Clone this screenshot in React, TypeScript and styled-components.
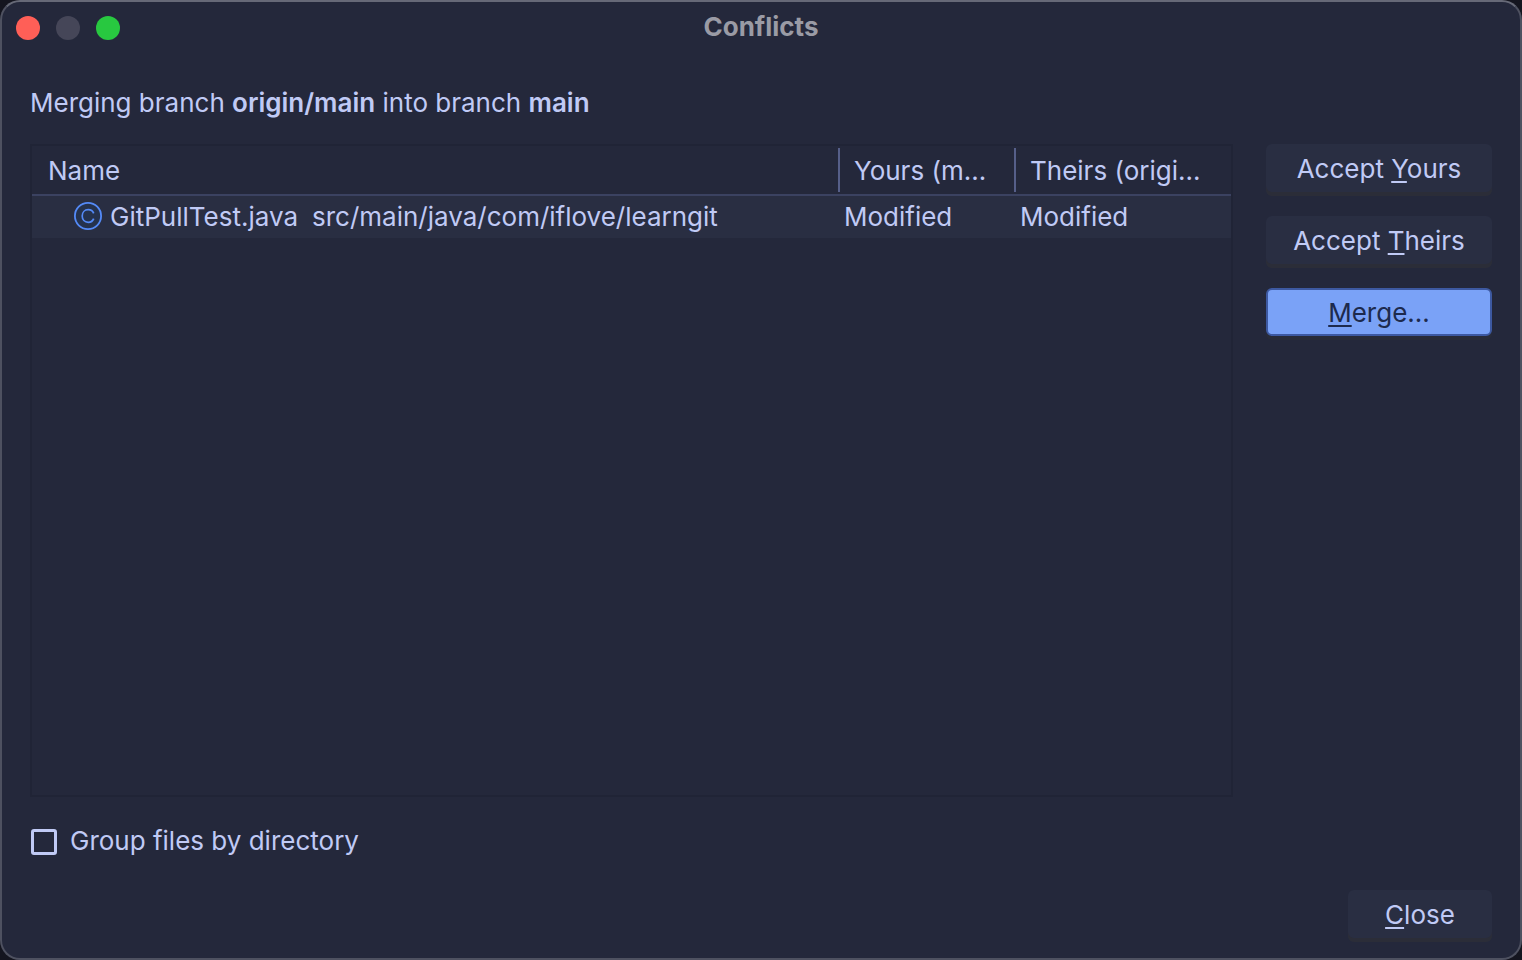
import React, { useState } from "react";
import styled, { createGlobalStyle } from "styled-components";

const colors = {
  window: "#24283b",
  text: "#c0caf5",
  panel: "#292e42",
  edge: "#202436",
  divider: "#3b4261",
  separator: "#565f89",
  accent: "#7aa2f7",
};

const GlobalStyle = createGlobalStyle`
  * { box-sizing: border-box; }
  body {
    margin: 0;
    background: #14151f;
    color: ${colors.text};
    font: 400 26px/32px Inter, sans-serif;
  }
`;

const Dialog = styled.main`
  display: flex;
  flex-direction: column;
  min-height: 100vh;
  background: ${colors.window};
  border: 2px solid #4e5160;
  border-top-color: #666977;
  border-radius: 20px;
`;

const TitleBar = styled.header`
  display: grid;
  grid-template-columns: 1fr auto 1fr;
  align-items: center;
  height: 52px;
  padding: 0 14px;
`;

const WindowControls = styled.div`
  display: flex;
  gap: 16px;
`;

const WindowControl = styled.button<{ $color: string }>`
  width: 24px;
  height: 24px;
  padding: 0;
  border: 0;
  border-radius: 50%;
  background: ${({ $color }) => $color};
`;

const Title = styled.h1`
  margin: 0;
  padding-bottom: 2px;
  color: #9a9ba5;
  font-size: 26px;
  font-weight: 700;
  line-height: 32px;
`;

const Content = styled.div`
  display: flex;
  flex: 1;
  flex-direction: column;
  padding: 33px 28px 16px;
`;

const Message = styled.p`
  margin: 0 0 25px;

  b {
    font-weight: 600;
  }
`;

const Body = styled.div`
  display: flex;
  flex: 1;
  gap: 33px;
`;

const FilePanel = styled.section`
  flex: 1;
  min-width: 0;
  border: 2px solid ${colors.edge};
`;

const FileTable = styled.table`
  width: 100%;
  table-layout: fixed;
  border-spacing: 0;
  white-space: nowrap;
`;

const NameColumn = styled.col``;

const StatusColumn = styled.col<{ $width: number }>`
  width: ${({ $width }) => $width}px;
`;

const HeadCell = styled.th`
  height: 50px;
  padding: 2px 0;
  border-bottom: 2px solid ${colors.divider};
  font-weight: 400;
  text-align: left;
`;

const HeadLabel = styled.div<{ $separated?: boolean }>`
  height: 44px;
  padding-left: ${({ $separated }) => ($separated ? 14 : 16)}px;
  border-left: ${({ $separated }) => ($separated ? `2px solid ${colors.separator}` : "0")};
  line-height: 46px;
`;

const Cell = styled.td`
  height: 42px;
  padding: 0 6px;
  background: ${colors.panel};
`;

const FileName = styled.div`
  display: flex;
  align-items: center;
  padding-left: 36px;
`;

const ClassIcon = styled.svg`
  width: 28px;
  height: 28px;
  margin: 0 8px 2px 0;
`;

const FilePath = styled.span`
  margin-left: 14px;
`;

const Actions = styled.aside`
  display: flex;
  flex-direction: column;
  gap: 20px;
  width: 226px;
`;

const Button = styled.button<{ $primary?: boolean }>`
  min-width: 144px;
  height: ${({ $primary }) => ($primary ? 48 : 52)}px;
  padding: ${({ $primary }) => ($primary ? "2px 20px 0" : "0 20px 2px")};
  border: ${({ $primary }) => ($primary ? "2px solid #3d59a1" : "0")};
  border-radius: 6px;
  background: ${({ $primary }) => ($primary ? colors.accent : colors.panel)};
  box-shadow: ${({ $primary }) => ($primary ? "0 4px 0 #282b38" : "inset 0 -4px 0 #2b2d38")};
  color: ${({ $primary }) => ($primary ? "#1d2a4d" : colors.text)};
  font: inherit;
  white-space: nowrap;
`;

const Mnemonic = styled.span`
  text-decoration: underline 2px;
  text-underline-offset: 3px;
  text-decoration-skip-ink: none;
`;

const GroupOption = styled.label`
  display: flex;
  align-items: center;
  align-self: flex-start;
  gap: 13px;
  margin-top: 28px;
`;

const Checkbox = styled.input`
  appearance: none;
  width: 26px;
  height: 26px;
  margin: 2px 0 0 1px;
  border: 3px solid ${colors.text};
  border-radius: 3px;

  &:checked {
    background: ${colors.accent};
  }
`;

const Footer = styled.footer`
  display: flex;
  justify-content: flex-end;
  margin-top: 33px;
`;

const files = [
  {
    name: "GitPullTest.java",
    path: "src/main/java/com/iflove/learngit",
    yours: "Modified",
    theirs: "Modified",
  },
];

export default function App() {
  const [grouped, setGrouped] = useState(false);

  return (
    <>
      <GlobalStyle />
      <Dialog>
        <TitleBar>
          <WindowControls>
            <WindowControl $color="#ff5f57" aria-label="Close window" />
            <WindowControl $color="#454658" aria-label="Minimize window" />
            <WindowControl $color="#28c840" aria-label="Zoom window" />
          </WindowControls>
          <Title>Conflicts</Title>
        </TitleBar>
        <Content>
          <Message>
            Merging branch <b>origin/main</b> into branch <b>main</b>
          </Message>
          <Body>
            <FilePanel>
              <FileTable>
                <colgroup>
                  <NameColumn />
                  <StatusColumn $width={176} />
                  <StatusColumn $width={217} />
                </colgroup>
                <thead>
                  <tr>
                    <HeadCell scope="col">
                      <HeadLabel>Name</HeadLabel>
                    </HeadCell>
                    <HeadCell scope="col">
                      <HeadLabel $separated>Yours (m...</HeadLabel>
                    </HeadCell>
                    <HeadCell scope="col">
                      <HeadLabel $separated>Theirs (origi...</HeadLabel>
                    </HeadCell>
                  </tr>
                </thead>
                <tbody>
                  {files.map((file) => (
                    <tr key={file.name}>
                      <Cell>
                        <FileName>
                          <ClassIcon viewBox="0 0 28 28" fill="none" aria-hidden="true">
                            <circle cx="14" cy="14" r="13.1" fill="#25324d" stroke="#548af7" strokeWidth="1.8" />
                            <path
                              d="M19.7 11.4C18.9 9.1 16.8 7.7 14.2 7.7C10.7 7.7 8.2 10.4 8.2 14C8.2 17.6 10.7 20.3 14.2 20.3C16.8 20.3 18.9 18.9 19.7 16.6"
                              stroke="#548af7"
                              strokeWidth="1.7"
                            />
                          </ClassIcon>
                          {file.name}
                          <FilePath>{file.path}</FilePath>
                        </FileName>
                      </Cell>
                      <Cell>{file.yours}</Cell>
                      <Cell>{file.theirs}</Cell>
                    </tr>
                  ))}
                </tbody>
              </FileTable>
            </FilePanel>
            <Actions>
              <Button>
                Accept <Mnemonic>Y</Mnemonic>ours
              </Button>
              <Button>
                Accept <Mnemonic>T</Mnemonic>heirs
              </Button>
              <Button $primary>
                <Mnemonic>M</Mnemonic>erge...
              </Button>
            </Actions>
          </Body>
          <GroupOption>
            <Checkbox
              type="checkbox"
              checked={grouped}
              onChange={(event) => setGrouped(event.target.checked)}
            />
            Group files by directory
          </GroupOption>
          <Footer>
            <Button>
              <Mnemonic>C</Mnemonic>lose
            </Button>
          </Footer>
        </Content>
      </Dialog>
    </>
  );
}
